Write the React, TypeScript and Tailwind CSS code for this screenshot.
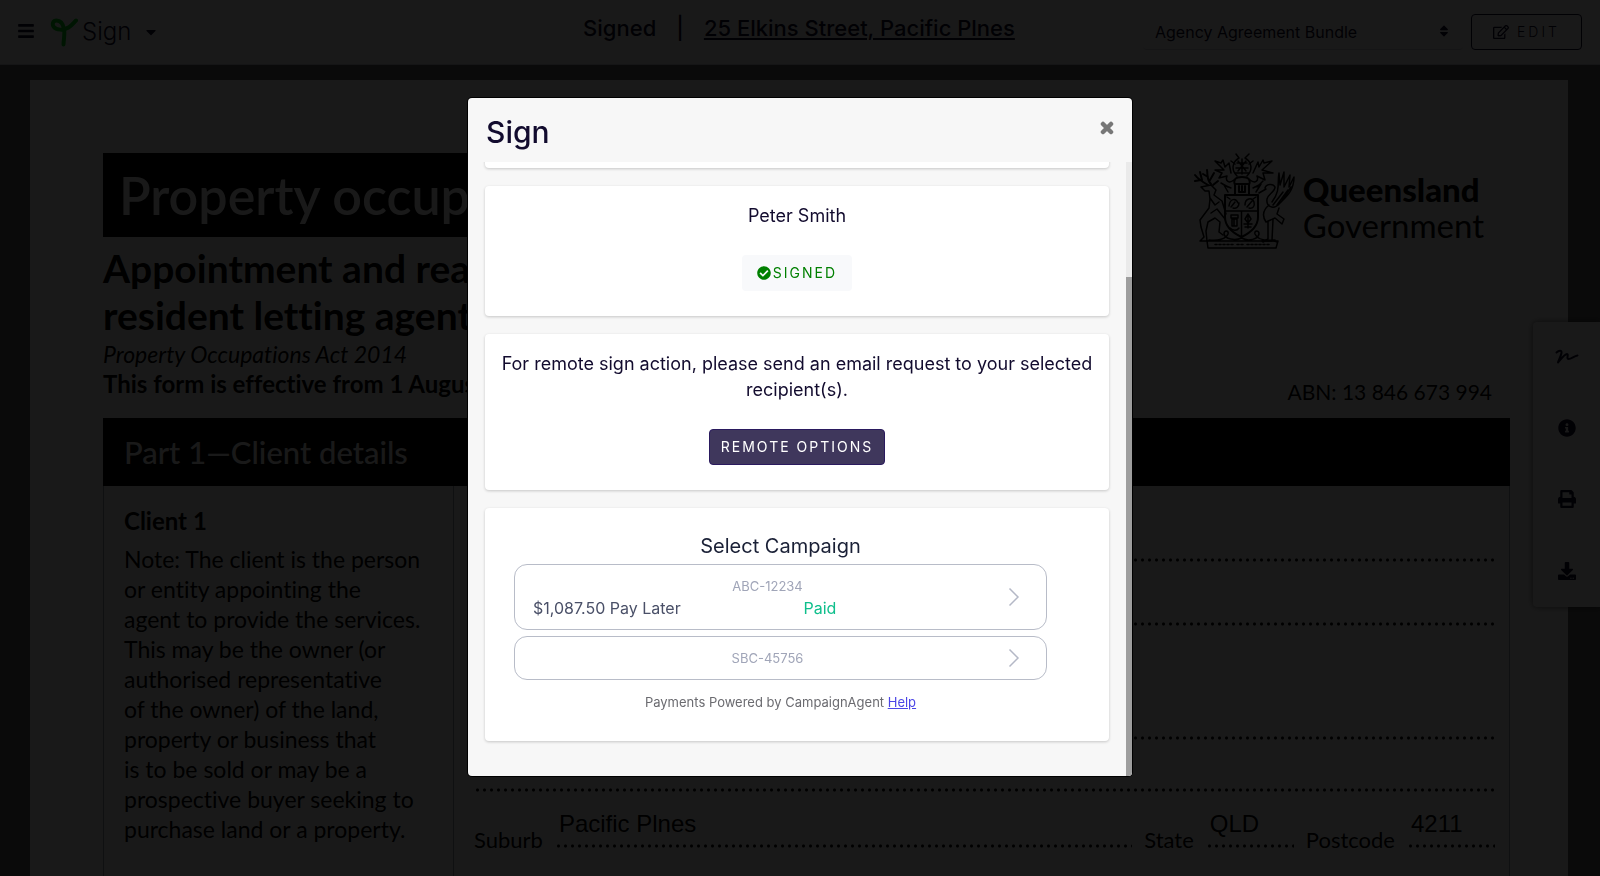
import { useEffect, useRef, useState, type ReactNode } from "react";
import {
  FaBars,
  FaCaretDown,
  FaCheckCircle,
  FaDownload,
  FaInfoCircle,
  FaRegEdit,
  FaSort,
} from "react-icons/fa";

const noteLines = [
  "Note: The client is the person",
  "or entity appointing the",
  "agent to provide the services.",
  "This may be the owner (or",
  "authorised representative",
  "of the owner) of the land,",
  "property or business that",
  "is to be sold or may be a",
  "prospective buyer seeking to",
  "purchase land or a property.",
];

function SproutLogo() {
  return (
    <svg viewBox="0 0 28 30" className="h-[30px] w-7" fill="none" aria-hidden="true">
      <path
        d="M13.5 27.5C13.8 21 15 16 14 12C13 6.500 10 3.500 6.500 3.500C3 3.500 2 7 3.500 9.500C6 13.500 14 13.500 18.500 10.500C22 8.500 23.500 6 26 3.500"
        stroke="#00d818"
        strokeWidth="4"
        strokeLinecap="round"
        strokeLinejoin="round"
      />
    </svg>
  );
}

function CoatOfArms() {
  return (
    <svg
      viewBox="0 0 102 96"
      className="h-24 w-[102px]"
      fill="none"
      stroke="#000"
      strokeWidth="1.5"
      strokeLinecap="round"
      strokeLinejoin="round"
      aria-hidden="true"
    >
      {/* shield */}
      <path d="M32 42H65V64C65 73 59 79 48.500 84C38 79 32 73 32 64Z" strokeWidth="2" />
      <path d="M32 58H65M48.500 58V84" />
      <path d="M36 53C37 45 43 45 45 50M38 54L42 49M40 55C43 56 46 54 46 50M52 52C52 45 59 44 61 49M54 54L59 48M56 55C60 56 62 53 61 49M37 46L34 44M60 46L63 44" />
      <path d="M38 62H45V65H38ZM39 66H44V73H39ZM41 66V73M37 75C40 78 44 78 46 75M55 61V75M55 61L52 66L55 70L58 66ZM51 71L59 71M52 74L58 74" />
      {/* helmet and crest */}
      <path d="M42 41V32C40 27 42 24 49 24C56 24 58 27 56 32V41M43 31H55M46 33V39H52V33M49 33V39" strokeWidth="2" />
      <path d="M44 23C38 17 39 9 46 5L43 1M54 23C60 17 59 9 52 5L56 1M44 10L54 10M45 8L53 18M53 8L45 18M49 6V21M43 15H55M42 20H56M38 8L42 11M60 8L56 11" />
      <path d="M41 27C36 31 32 28 34 23L26 25L29 20L22 17L31 17L22 8L28 10L30 7L32 14L36 10L38 20M57 27C62 31 66 28 64 23L72 27L70 20L80 20L69 17L79 8L71 10L70 7L66 14L65 9L60 20" />
      <path d="M38 35L31 32L35 39M60 35L68 31L63 39M28 30L35 34M70 28L64 34" />
      {/* deer */}
      <path d="M8 34L18 32L23 37L21 42L29 48L33 61M8 34L12 38L16 38L17 46L16 55L7 67L8 74L11 84L7 88H14L13 78L15 69L22 65L27 69L26 79L30 82M17 45L22 52L26 49M18 60L24 56L32 66" />
      <path d="M15 32C8 28 5 26 2 22M8 27L2 28M9 27L7 19M18 31C13 26 15 21 14 17M15 24L10 21M17 27L21 20M20 32L25 28" strokeWidth="2" />
      {/* brolga */}
      <path d="M72 35C73 31 80 30 82 34C82 39 75 41 74 46C73 53 80 58 87 50C93 44 101 38 101 24L96 34L97 22L91 34L91 19L87 32L86 20C84 30 88 37 79 49M73 36L66 40M76 52C70 57 69 63 73 69L82 65L89 71L91 66L84 61L86 55M75 69V86L70 89M80 67L79 87L84 89M69 88H79M90 39L80 52M95 37L84 52M98 34L89 48" />
      {/* compartment and scroll */}
      <path d="M16 87C25 88 33 86 35 81C36 77 31 77 31 81C32 86 42 88 48.500 85C56 89 65 86 66 81C66 77 61 77 62 81C64 86 72 88 82 87M14 88H85L83 95H15Z" />
      <path d="M22 91.500H40M44 91.500H50M54 91.500H76" strokeDasharray="2 2" />
    </svg>
  );
}

function DottedLine() {
  return (
    <div className="h-1 flex-1 bg-[radial-gradient(circle,#000_1px,transparent_2px)] bg-[length:7px_4px]" />
  );
}

function TopBar() {
  return (
    <header className="grid h-[65px] shrink-0 grid-cols-3 items-center border-b border-gray-300 bg-white pr-[18px] pl-4 text-[#120b2e]">
      <div className="flex items-center">
        <button aria-label="Menu" className="px-px pb-0.5">
          <FaBars size={18} />
        </button>
        <button className="ml-3.5 flex items-center">
          <SproutLogo />
          <span className="ml-1 text-2xl font-light">Sign</span>
          <FaCaretDown className="ml-3" size={16} />
        </button>
      </div>
      <div className="flex justify-center gap-5 pb-2 text-[22px] font-medium whitespace-nowrap">
        <span>Signed</span>
        <span>|</span>
        <a href="#property" className="underline">
          25 Elkins Street, Pacific Plnes
        </a>
      </div>
      <div className="flex items-center justify-end gap-2">
        <div className="relative w-80">
          <select
            aria-label="Document"
            className="h-9 w-full appearance-none rounded border-b border-gray-300 bg-white px-3 text-base"
          >
            <option>Agency Agreement Bundle</option>
          </select>
          <FaSort className="pointer-events-none absolute top-2.5 right-3" size={14} />
        </div>
        <button className="flex h-9 w-[111px] items-center justify-center gap-2 rounded border border-[#120b2e] text-sm font-light tracking-[3px]">
          <FaRegEdit size={16} />
          EDIT
        </button>
      </div>
    </header>
  );
}

function FilledField({ value, grow = false }: { value: string; grow?: boolean }) {
  return (
    <span className={`flex flex-col gap-1.5 ${grow ? "flex-1" : "w-[88px]"}`}>
      <span className="px-1 font-['Liberation_Sans',sans-serif] text-2xl leading-7">{value}</span>
      <span className="flex">
        <DottedLine />
      </span>
    </span>
  );
}

function FormPage() {
  return (
    <main className="mt-[15px] mr-8 ml-[30px] flex-1 overflow-hidden bg-white pt-[73px] pr-[58px] pl-[73px] font-['Lato','Open_Sans',sans-serif] text-black [font-variant-ligatures:none]">
      <div className="flex h-[92px] justify-between">
        <h1 className="flex h-[84px] w-[70%] items-center bg-black px-4 text-[52px] font-semibold whitespace-nowrap text-white">
          Property occupations
        </h1>
        <div className="flex items-start gap-2 pr-[26px]">
          <CoatOfArms />
          <div className="pt-[18px] text-[33px] leading-9">
            <div className="font-black">Queensland</div>
            <div>Government</div>
          </div>
        </div>
      </div>
      <h2 className="text-[39px] leading-[47px] font-bold">
        Appointment and reappointment of a
        <br />
        resident letting agent
      </h2>
      <p className="text-[23px] leading-[30px] italic">Property Occupations Act 2014</p>
      <div className="flex justify-between pr-[18px] leading-[30px]">
        <p className="text-2xl leading-[30px] font-bold">This form is effective from 1 August</p>
        <p className="pt-2 text-[21px]">ABN: 13 846 673 994</p>
      </div>
      <h3 className="mt-[11px] flex h-[68px] items-center bg-black px-[21px] text-[31px] font-medium text-white">
        Part 1—Client details
      </h3>
      <div className="flex border-x border-gray-400">
        <section className="w-[350px] shrink-0 border-r border-gray-400 px-5 pt-5 pb-16">
          <h4 className="text-2xl leading-[30px] font-bold">Client 1</h4>
          <p className="pt-2 text-[23px] leading-[30px] whitespace-nowrap">
            {noteLines.map((line) => (
              <span key={line} className="block">
                {line}
              </span>
            ))}
          </p>
        </section>
        <section className="flex flex-1 flex-col pt-[72px] pr-3.5 pl-5 text-[22px]">
          <div className="flex h-16">
            <DottedLine />
          </div>
          <div className="flex h-[114px]">
            <DottedLine />
          </div>
          <div className="flex h-[52px]">
            <DottedLine />
          </div>
          <div className="flex h-[22px]">
            <DottedLine />
          </div>
          <div className="flex items-end gap-3 leading-4">
            <span>Suburb</span>
            <FilledField value="Pacific Plnes" grow />
            <span>State</span>
            <FilledField value="QLD" />
            <span>Postcode</span>
            <FilledField value="4211" />
          </div>
        </section>
      </div>
    </main>
  );
}

function SideTray() {
  return (
    <nav className="fixed top-[322px] right-0 flex h-[285px] w-[67px] flex-col items-center justify-around rounded-l bg-white text-[#120b2e] shadow-[0_0_6px_rgba(0,0,0,0.6)]">
      <button aria-label="Sign">
        <svg viewBox="0 0 24 16" className="h-4 w-6" fill="none" stroke="currentColor" strokeWidth="2" strokeLinecap="round" strokeLinejoin="round">
          <path d="M1.500 3.500C4 1 7 1 6.500 4C6 7 3.500 11 3 13.500C6 10 9.500 5 12 5C14 5 11 10 13.500 10C16.500 10 19 7 22.500 6.500" />
        </svg>
      </button>
      <button aria-label="Information">
        <FaInfoCircle size={18} />
      </button>
      <button aria-label="Print">
        <svg viewBox="0 0 512 512" width="18" height="18" fill="currentColor">
          <path d="M448 192V77a32 32 0 0 0-9-22L393 9a32 32 0 0 0-22-9H96a32 32 0 0 0-32 32v160c-35 0-64 29-64 64v112a16 16 0 0 0 16 16h48v96a32 32 0 0 0 32 32h320a32 32 0 0 0 32-32v-96h48a16 16 0 0 0 16-16V256c0-35-29-64-64-64zm-64 256H128v-96h256zm0-224H128V64h192v48a16 16 0 0 0 16 16h48z" />
        </svg>
      </button>
      <button aria-label="Download">
        <FaDownload size={18} />
      </button>
    </nav>
  );
}

function Card({ children, className = "" }: { children?: ReactNode; className?: string }) {
  return (
    <section className={`shrink-0 rounded bg-white shadow-[0_1px_3px_rgba(0,0,0,0.2)] ${className}`}>
      {children}
    </section>
  );
}

function CampaignRow({ code, amount, status }: { code: string; amount?: string; status?: string }) {
  return (
    <button className="flex w-full items-center gap-1.5 rounded-[13px] border border-[#b8bcc8] py-2.5 pr-[26px] pl-[18px]">
      <span className="flex-1">
        <span className="block text-[13px] leading-[22px] text-[#a0a5b8]">{code}</span>
        {amount && (
          <span className="flex text-left text-base leading-[22px]">
            <span className="w-1/2 text-[#4a5068]">{amount}</span>
            <span className="pl-9 text-[#0fbf8c]">{status}</span>
          </span>
        )}
      </span>
      <svg viewBox="0 0 12 20" className="h-5 w-3" fill="none" stroke="#b4b8c6" strokeWidth="1.500" aria-hidden="true">
        <path d="M1.500 1.500L10 10L1.500 18.500" />
      </svg>
    </button>
  );
}

function SignModal() {
  const bodyRef = useRef<HTMLDivElement>(null);
  const [thumb, setThumb] = useState({ top: 0, height: 100 });

  const updateThumb = () => {
    const el = bodyRef.current;
    if (!el) return;
    setThumb({
      top: (el.scrollTop / el.scrollHeight) * 100,
      height: (el.clientHeight / el.scrollHeight) * 100,
    });
  };

  useEffect(() => {
    const el = bodyRef.current;
    if (el) el.scrollTop = el.scrollHeight;
    updateThumb();
  }, []);

  return (
    <div className="fixed inset-0 flex items-start justify-center bg-black/90 pt-[98px]">
      <div
        role="dialog"
        aria-label="Sign"
        className="flex h-[calc(100vh-198px)] w-full max-w-[664px] flex-col overflow-hidden rounded bg-[#f7f7f7] text-[#120b2e] ring-1 ring-black"
      >
        <div className="flex h-16 shrink-0 items-start justify-between px-[18px] pt-3">
          <h2 className="text-3xl leading-[44px] font-medium">Sign</h2>
          <button aria-label="Close" className="pt-[11px] text-[#777]">
            <svg viewBox="0 0 14 14" className="size-3.5" stroke="currentColor" strokeWidth="4.500" strokeLinecap="round">
              <path d="M3 3L11 11M11 3L3 11" />
            </svg>
          </button>
        </div>
        <div className="flex min-h-0 flex-1">
          <div
            ref={bodyRef}
            onScroll={updateThumb}
            className="flex flex-1 flex-col gap-[18px] overflow-y-auto px-[17px] pt-[17px] pb-[35px] text-center [scrollbar-width:none]"
          >
            <Card className="h-[130px]" />
            <Card className="px-3 pt-[17px] pb-[25px] text-lg leading-[26px]">
              <p>Peter Smith</p>
              <div className="mt-[26px] flex justify-center">
                <button className="flex h-9 items-center rounded bg-[#f8f9fb] px-[15px] text-sm tracking-[2px] text-[#008000]">
                  <FaCheckCircle className="mr-0.5" size={14} />
                  SIGNED
                </button>
              </div>
            </Card>
            <Card className="px-3 pt-[17px] pb-[25px] text-lg leading-[26px]">
              <p>
                For remote sign action, please send an email request to your selected
                recipient(s).
              </p>
              <button className="mx-auto mt-[26px] block h-9 rounded border border-[#2a1a5e] bg-[#3f375c] px-[11px] text-sm tracking-[2px] text-white">
                REMOTE OPTIONS
              </button>
            </Card>
            <Card className="pt-[22px] pr-[62px] pb-[29px] pl-[29px]">
              <h3 className="pb-0.5 text-xl leading-8 text-[#1a2036]">Select Campaign</h3>
              <div className="flex flex-col gap-1.5">
                <CampaignRow code="ABC-12234" amount="$1,087.50 Pay Later" status="Paid" />
                <CampaignRow code="SBC-45756" />
              </div>
              <p className="mt-3 text-[13px] leading-5 text-[#6b6b70]">
                Payments Powered by CampaignAgent{" "}
                <a href="#help" className="text-[#4b45e6] underline">
                  Help
                </a>
              </p>
            </Card>
          </div>
          <div className="w-1.5 bg-[#eaeaea]">
            <div
              className="relative bg-[#9e9e9e]"
              style={{ top: `${thumb.top}%`, height: `${thumb.height}%` }}
            />
          </div>
        </div>
      </div>
    </div>
  );
}

export default function App() {
  return (
    <div className="flex h-screen flex-col overflow-hidden bg-[#646464] font-['Inter','Roboto',sans-serif]">
      <TopBar />
      <FormPage />
      <SideTray />
      <SignModal />
    </div>
  );
}
